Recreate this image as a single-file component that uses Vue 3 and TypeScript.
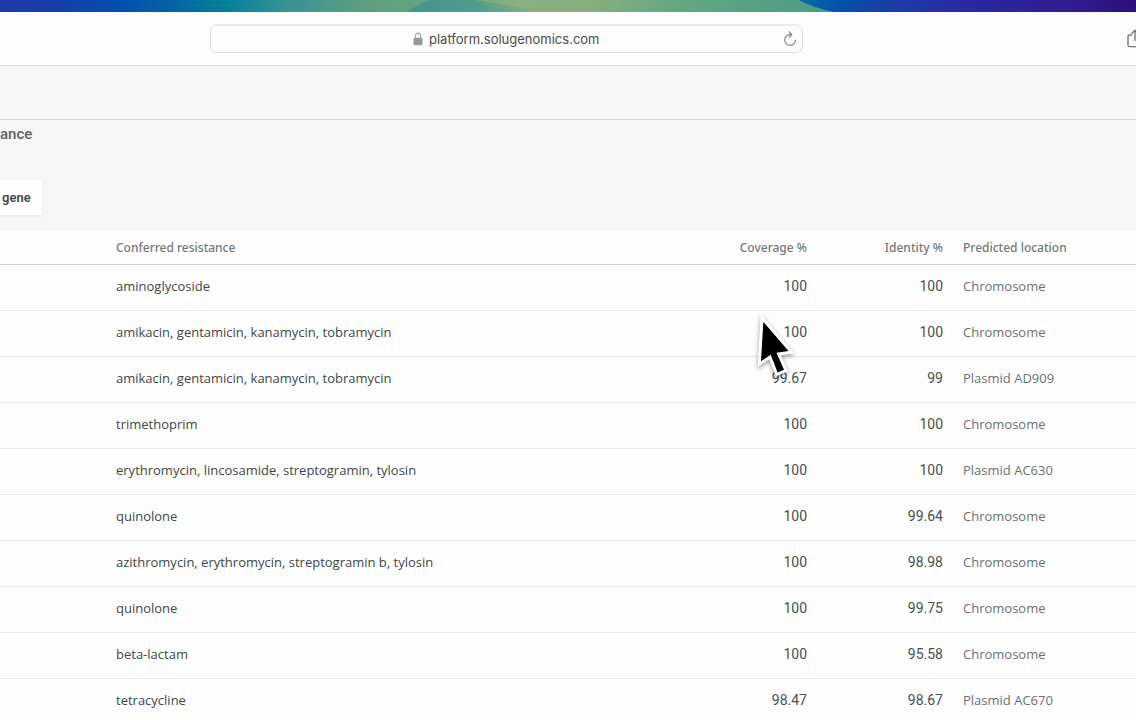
<script setup lang="ts">
import { ref } from 'vue'

interface GeneRow {
  resistance: string
  coverage: string
  identity: string
  location: string
}

const address = ref('platform.solugenomics.com')

const rows: GeneRow[] = [
  { resistance: 'aminoglycoside', coverage: '100', identity: '100', location: 'Chromosome' },
  { resistance: 'amikacin, gentamicin, kanamycin, tobramycin', coverage: '100', identity: '100', location: 'Chromosome' },
  { resistance: 'amikacin, gentamicin, kanamycin, tobramycin', coverage: '99.67', identity: '99', location: 'Plasmid AD909' },
  { resistance: 'trimethoprim', coverage: '100', identity: '100', location: 'Chromosome' },
  { resistance: 'erythromycin, lincosamide, streptogramin, tylosin', coverage: '100', identity: '100', location: 'Plasmid AC630' },
  { resistance: 'quinolone', coverage: '100', identity: '99.64', location: 'Chromosome' },
  { resistance: 'azithromycin, erythromycin, streptogramin b, tylosin', coverage: '100', identity: '98.98', location: 'Chromosome' },
  { resistance: 'quinolone', coverage: '100', identity: '99.75', location: 'Chromosome' },
  { resistance: 'beta-lactam', coverage: '100', identity: '95.58', location: 'Chromosome' },
  { resistance: 'tetracycline', coverage: '98.47', identity: '98.67', location: 'Plasmid AC670' },
]
</script>

<template>
  <div class="screen">
    <svg class="wallpaper" viewBox="0 0 1136 12" preserveAspectRatio="none" aria-hidden="true">
      <defs>
        <linearGradient id="sky" x1="0" x2="1" y1="0" y2="0">
          <stop offset="0" stop-color="#2238a8" />
          <stop offset="0.05" stop-color="#1440ab" />
          <stop offset="0.11" stop-color="#0550ac" />
          <stop offset="0.16" stop-color="#0368a4" />
          <stop offset="0.2" stop-color="#04809b" />
          <stop offset="0.25" stop-color="#389296" />
          <stop offset="0.33" stop-color="#579b83" />
          <stop offset="0.7" stop-color="#0a6da4" />
          <stop offset="0.74" stop-color="#0650ac" />
          <stop offset="0.79" stop-color="#1d3ba6" />
          <stop offset="0.86" stop-color="#2b27a0" />
          <stop offset="0.94" stop-color="#311c91" />
          <stop offset="1" stop-color="#2c107b" />
        </linearGradient>
        <linearGradient id="hill" gradientUnits="userSpaceOnUse" x1="300" x2="830" y1="0" y2="0">
          <stop offset="0" stop-color="#579b83" stop-opacity="0" />
          <stop offset="0.15" stop-color="#5d9f80" />
          <stop offset="0.28" stop-color="#66a782" />
          <stop offset="0.42" stop-color="#8bb080" />
          <stop offset="0.55" stop-color="#86ae7e" />
          <stop offset="0.7" stop-color="#67a783" />
          <stop offset="0.85" stop-color="#55a183" />
          <stop offset="1" stop-color="#4b9b85" />
        </linearGradient>
        <linearGradient id="pool" gradientUnits="userSpaceOnUse" x1="408" x2="550" y1="0" y2="0">
          <stop offset="0" stop-color="#43938f" />
          <stop offset="0.5" stop-color="#529c8b" />
          <stop offset="1" stop-color="#82ad80" stop-opacity="0" />
        </linearGradient>
      </defs>
      <rect width="1136" height="12" fill="url(#sky)" />
      <path d="M300 0H799Q814 8 834 12H300Z" fill="url(#hill)" />
      <path d="M408 12Q418 4 430 0H475Q510 6 550 12Z" fill="url(#pool)" />
    </svg>

    <header class="toolbar">
      <div class="address">
        <div class="site">
          <svg class="lock" viewBox="0 0 10 14" aria-hidden="true">
            <path d="M2.5 6V3.7a2.5 2.5 0 0 1 5 0V6" fill="none" stroke="#a8a8a8" stroke-width="1.2" />
            <rect x="0.5" y="5.8" width="9" height="7.4" rx="1.2" fill="#999" />
          </svg>
          <input v-model="address" class="url" type="text" aria-label="Address" spellcheck="false" />
        </div>
        <button class="icon-button reload" type="button" aria-label="Reload">
          <svg width="14" height="16" viewBox="0 0 14 16" fill="none" stroke="#858585" stroke-width="1.2" stroke-linecap="round" stroke-linejoin="round" aria-hidden="true">
            <path d="M7.6 3.6H7a5.4 5.4 0 1 0 5.5 5.4" />
            <path d="M6.2 1l2.7 2.7-2.7 2.7" />
          </svg>
        </button>
      </div>
      <button class="icon-button share" type="button" aria-label="Share">
        <svg width="18" height="20" viewBox="0 0 18 20" fill="none" stroke="#777" stroke-width="1.4" stroke-linecap="round" stroke-linejoin="round" aria-hidden="true">
          <path d="M5.5 6H3.4Q2 6 2 7.400V16.200Q2 17.600 3.400 17.600H14.600Q16 17.600 16 16.200V7.400Q16 6 14.600 6H12.500" />
          <path d="M9 11.500V1.500M6 4.200L9 1.300L12 4.200" />
        </svg>
      </button>
    </header>

    <div class="app-bar"></div>

    <main>
      <h1 class="title">ance</h1>
      <button class="tab" type="button">gene</button>

      <table class="genes">
        <colgroup>
          <col class="col-lead" />
          <col />
          <col class="col-number" />
          <col class="col-number" />
          <col class="col-location" />
        </colgroup>
        <thead>
          <tr>
            <td></td>
            <th scope="col">Conferred resistance</th>
            <th scope="col" class="number">Coverage %</th>
            <th scope="col" class="number">Identity %</th>
            <th scope="col">Predicted location</th>
          </tr>
        </thead>
        <tbody>
          <tr v-for="(row, i) in rows" :key="i">
            <td></td>
            <td>{{ row.resistance }}</td>
            <td class="number">{{ row.coverage }}</td>
            <td class="number">{{ row.identity }}</td>
            <td class="location">{{ row.location }}</td>
          </tr>
        </tbody>
      </table>
    </main>

    <svg class="pointer" width="56" height="74" viewBox="0 0 56 74" aria-hidden="true">
      <path d="M13.300 11.700L38.500 41L26.500 42.700L34 59.700L27.600 62.400L20.700 44.700L11 51.200Z" fill="#000" stroke="#fff" stroke-width="6" stroke-miterlimit="8" paint-order="stroke" />
    </svg>
  </div>
</template>

<style>
body {
  margin: 0;
  background: #fdfdfd;
}
</style>

<style scoped>
.screen {
  position: relative;
  height: 100vh;
  overflow: hidden;
  background: #fdfdfd;
  color: #414745;
  font-family: "Open Sans", "Noto Sans", sans-serif;
  font-size: 13px;
}

.wallpaper {
  display: block;
  width: 100%;
  height: 12px;
}

.toolbar {
  display: grid;
  grid-template-columns: 210fr 593fr 333fr;
  align-items: center;
  box-sizing: border-box;
  height: 54px;
  border-bottom: 1px solid #dcdcdc;
  background: #fdfdfd;
}

.address {
  grid-column: 2;
  display: grid;
  grid-template-columns: 1fr auto 1fr;
  align-items: center;
  box-sizing: border-box;
  height: 29px;
  border: 1px solid #dedede;
  border-top: 2px solid #ebebeb;
  border-radius: 7px;
}

.site {
  grid-column: 2;
  display: flex;
  align-items: center;
  gap: 6px;
}

.lock {
  width: 10px;
  height: 14px;
}

.url {
  width: 171px;
  padding: 0;
  border: 0;
  outline: 0;
  background: transparent;
  color: #4b4b4b;
  font: 13px/20px Inter, sans-serif;
}

.icon-button {
  display: flex;
  padding: 0;
  border: 0;
  background: transparent;
}

.reload {
  justify-self: end;
  margin-right: 5px;
}

.share {
  justify-self: end;
  margin-right: -8px;
}

.app-bar {
  box-sizing: border-box;
  height: 54px;
  border-bottom: 1px solid #d9dada;
  background: #f6f6f6;
}

main {
  display: flex;
  flex-direction: column;
  align-items: flex-start;
  background: #f6f6f6;
}

.title {
  margin: 0;
  color: #5c6260;
  font: 500 15px/28px Roboto, sans-serif;
}

.tab {
  height: 35px;
  margin: 32px 0 16px;
  padding: 0 11px 0 2px;
  border: 0;
  border-radius: 0 3px 3px 0;
  background: #fdfefd;
  box-shadow: 0 1px 3px rgb(0 0 0 / 8%);
  color: #414745;
  font: 600 13px/20px Roboto, sans-serif;
}

.genes {
  width: 100%;
  border-collapse: separate;
  border-spacing: 0;
  table-layout: fixed;
  background: #fdfdfd;
}

.col-lead {
  width: 106px;
}

.col-number {
  width: 136px;
}

.col-location {
  width: 183px;
}

th,
td {
  box-sizing: border-box;
  height: 46px;
  padding: 0 10px 4px;
  border-bottom: 1px solid #e8e8e8;
  line-height: 18px;
  text-align: left;
  white-space: nowrap;
}

.number {
  text-align: right;
}

tbody .number {
  color: #4a504e;
  font-family: Roboto, sans-serif;
  font-size: 14px;
}

thead th,
thead td {
  height: 34px;
  padding-bottom: 0;
  border-bottom-color: #cfd1d0;
  color: #747977;
  font-family: "Noto Sans", sans-serif;
  font-size: 12px;
  font-weight: 500;
}

.location {
  color: #6c716f;
}

.pointer {
  position: absolute;
  top: 310px;
  left: 750px;
  filter: drop-shadow(0 2px 2px rgb(0 0 0 / 40%));
}
</style>
